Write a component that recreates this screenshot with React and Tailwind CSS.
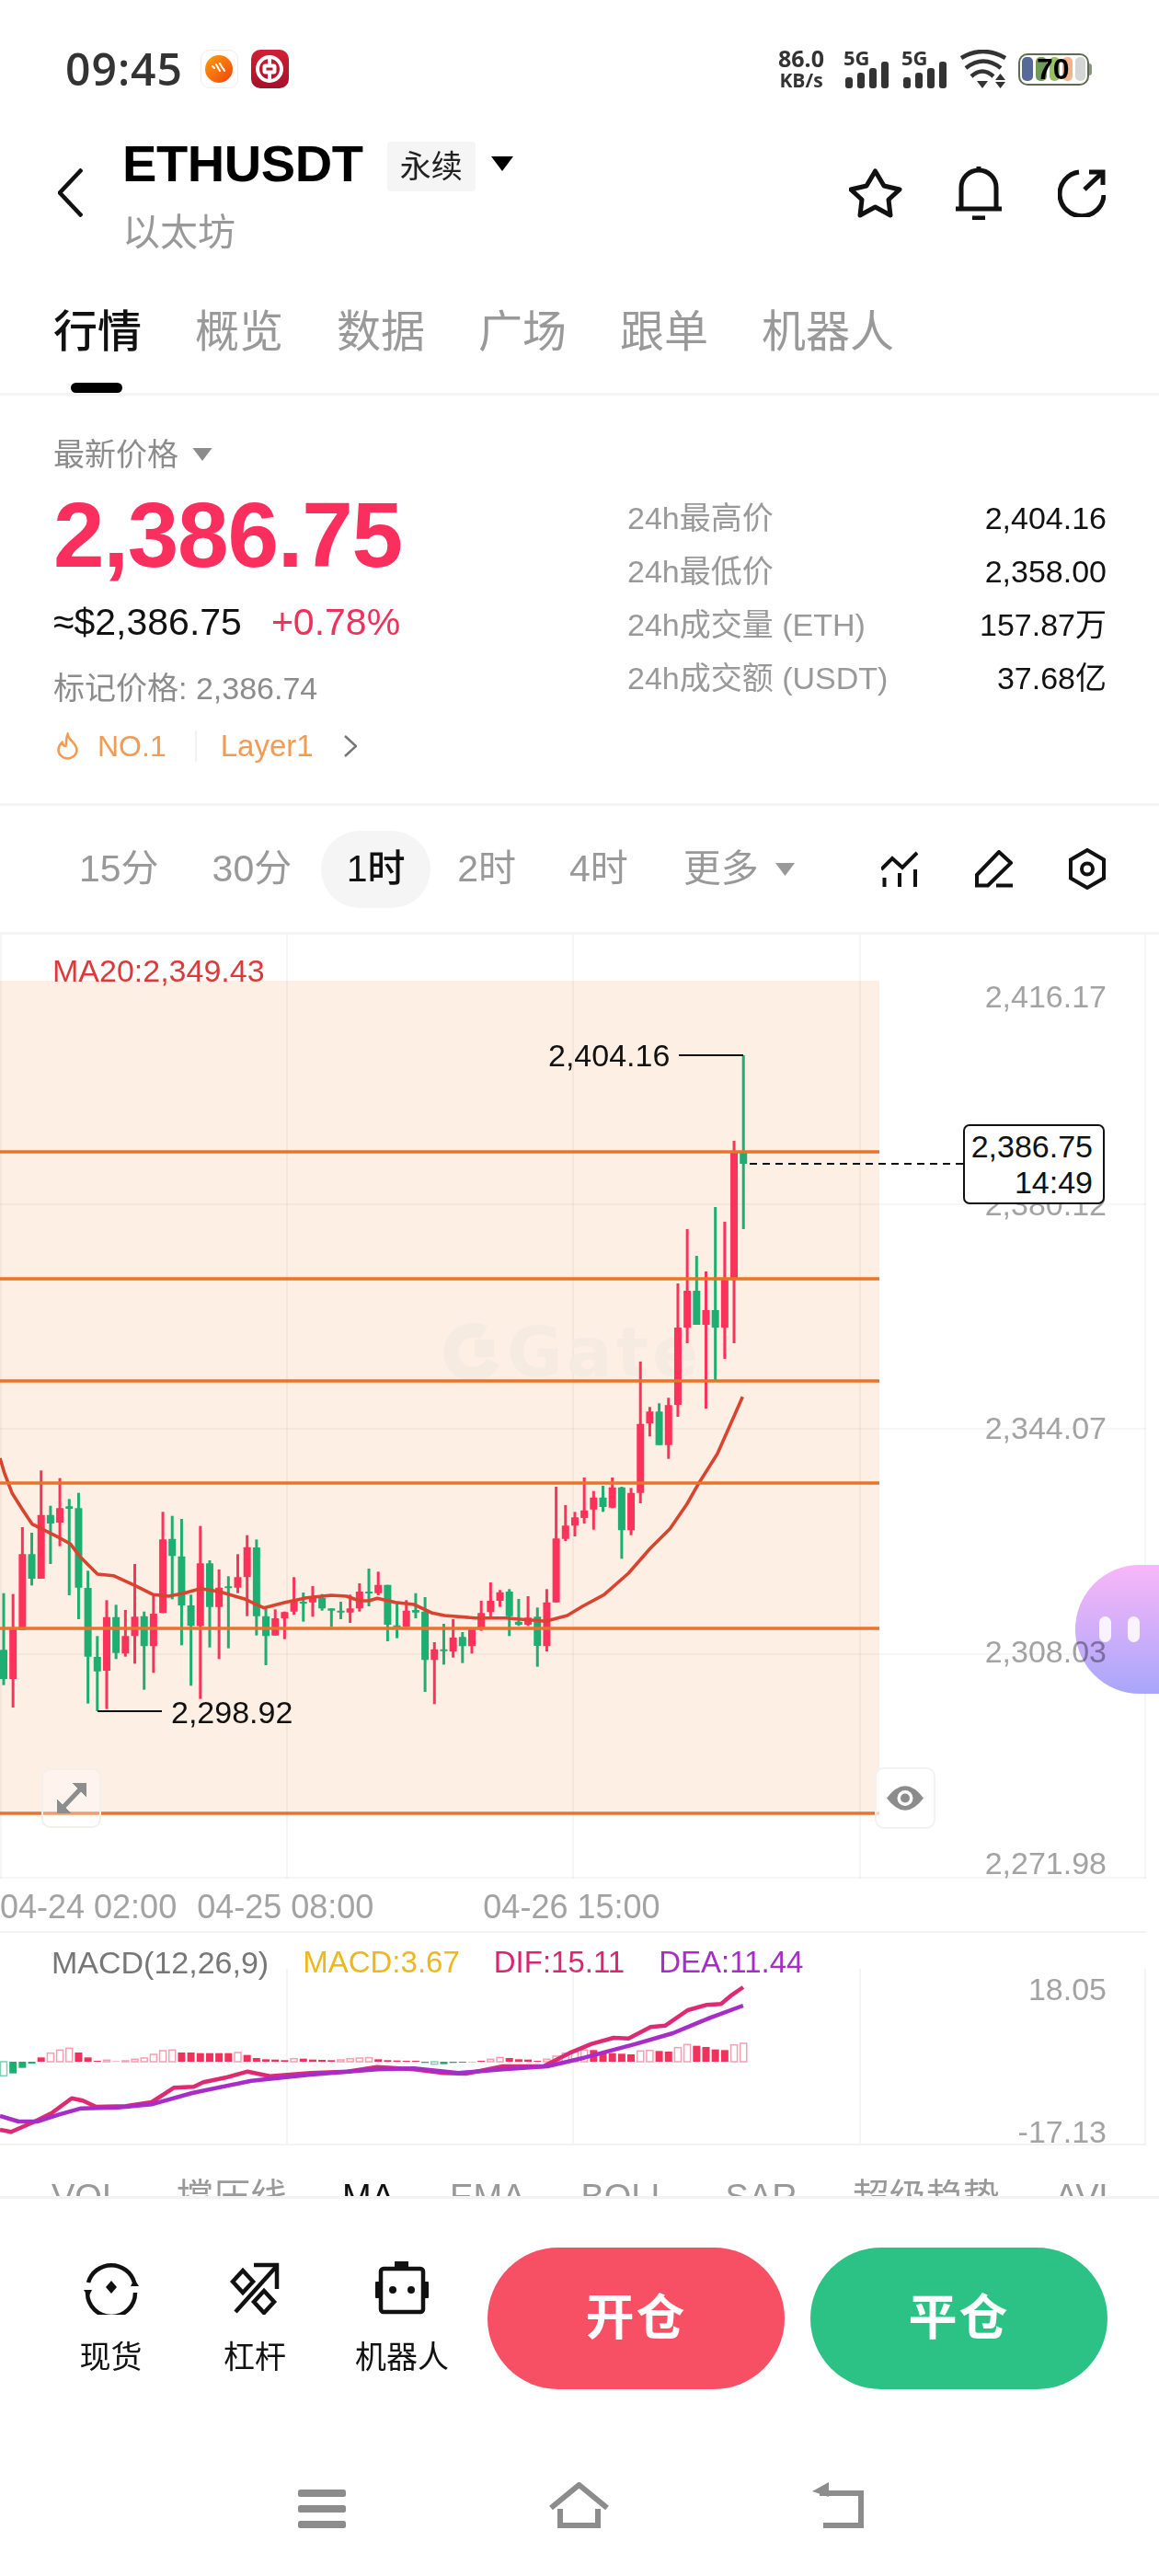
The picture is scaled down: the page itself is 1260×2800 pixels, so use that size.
import React from "react";

// candle rows: [high, bodyTop, bodyBottom, low, colour], y values read off the chart at 3x
const RED = "#fb3259";
const GREEN = "#1fae72";

const leftCandles = [
  [515, 700, 795, 815, "g"], [518, 630, 795, 888, "r"], [300, 388, 635, 635, "r"], [318, 388, 468, 490, "g"],
  [115, 260, 468, 468, "r"], [230, 260, 288, 420, "g"], [140, 238, 285, 362, "r"], [208, 232, 240, 522, "g"],
  [188, 238, 497, 600, "g"], [442, 498, 722, 875, "g"], [655, 723, 770, 900, "g"], [538, 593, 768, 893, "r"],
  [553, 593, 710, 730, "g"], [570, 655, 712, 722, "r"], [420, 592, 655, 745, "r"], [575, 590, 688, 830, "g"],
  [525, 582, 688, 775, "r"], [250, 340, 580, 580, "r"], [263, 338, 394, 535, "g"], [273, 395, 555, 685, "g"],
  [520, 555, 622, 817, "g"], [296, 418, 622, 860, "r"], [408, 418, 560, 692, "g"], [438, 497, 560, 730, "r"],
  [460, 493, 497, 695, "g"], [388, 463, 497, 515, "r"], [326, 365, 463, 590, "r"], [340, 366, 590, 653, "g"],
  [565, 590, 655, 750, "g"], [568, 597, 653, 653, "r"], [575, 577, 597, 665, "r"], [463, 540, 575, 585, "r"],
  [513, 543, 547, 608, "g"], [492, 527, 545, 592, "r"], [518, 530, 565, 572, "g"], [565, 565, 572, 625, "g"],
  [543, 572, 577, 600, "g"], [520, 565, 578, 612, "r"], [483, 510, 565, 575, "r"],
];

const midCandles = [
  [915, 990, 993, 1038, "g"], [925, 968, 995, 1002, "r"], [968, 968, 1098, 1152, "g"], [1028, 1100, 1103, 1142, "g"],
  [1018, 1052, 1105, 1105, "r"], [995, 1050, 1058, 1077, "g"], [1008, 1055, 1213, 1317, "g"], [1155, 1178, 1213, 1357, "r"],
  [1095, 1178, 1182, 1228, "g"], [1080, 1140, 1185, 1205, "r"], [1122, 1138, 1168, 1223, "g"], [1108, 1112, 1168, 1192, "r"],
  [1020, 1060, 1112, 1118, "r"], [960, 1020, 1057, 1080, "r"], [985, 992, 1020, 1040, "r"], [982, 990, 1070, 1135, "g"],
  [1014, 1088, 1098, 1102, "g"], [1005, 1075, 1098, 1102, "r"], [1042, 1072, 1167, 1235, "g"], [982, 1025, 1168, 1185, "r"],
  [648, 817, 1025, 1025, "r"], [708, 775, 818, 825, "r"], [730, 748, 775, 810, "r"], [618, 725, 750, 768, "r"],
  [662, 683, 722, 788, "r"], [645, 683, 714, 730, "g"], [618, 650, 716, 718, "r"], [648, 650, 790, 883, "g"],
  [652, 668, 790, 806, "r"], [240, 443, 668, 702, "r"], [388, 403, 442, 484, "r"], [376, 403, 512, 512, "g"],
  [358, 382, 512, 557, "r"],
];

// last ones are already page pixels
const topCandles = [
  [1395, 1443, 1527, 1540, "r"], [1336, 1403, 1443, 1460, "r"], [1365, 1403, 1440, 1440, "g"], [1382, 1424, 1440, 1531, "r"],
  [1312, 1424, 1443, 1500, "g"], [1328, 1390, 1443, 1477, "r"], [1240, 1252, 1390, 1460, "r"], [1147, 1253, 1265, 1336, "g"],
];

const toPage = (rows, base) => rows.map((r) => [base + r[0] / 3, base + r[1] / 3, base + r[2] / 3, base + r[3] / 3, r[4]]);
const candles = [...toPage(leftCandles, 1560), ...toPage(midCandles, 1400), ...topCandles];

const maLeft = [[0, 75], [15, 125], [40, 190], [75, 245], [105, 290], [135, 305], [195, 335], [230, 355], [260, 395], [290, 425], [318, 453], [370, 458], [440, 490], [500, 520], [550, 525], [600, 515], [654, 500], [715, 510], [800, 535], [860, 563], [930, 545], [1000, 530], [1080, 522], [1130, 525], [1172, 540]];
const maRight = [[3, 1020], [30, 1012], [90, 1025], [150, 1032], [210, 1060], [250, 1068], [350, 1076], [450, 1076], [580, 1087], [650, 1068], [700, 1038], [770, 1000], [850, 930], [920, 850], [985, 785], [1040, 705], [1080, 635], [1140, 540], [1222, 355]];
const maPoints = [
  ...maLeft.map(([x, y]) => `${(x / 3).toFixed(1)},${(1560 + y / 3).toFixed(1)}`),
  ...maRight.map(([x, y]) => `${(400 + x / 3).toFixed(1)},${(1400 + y / 3).toFixed(1)}`),
].join(" ");

const dif = [[0, 825], [15, 832], [45, 800], [70, 770], [97, 722], [112, 730], [130, 750], [170, 748], [205, 735], [235, 688], [262, 685], [275, 670], [305, 655], [335, 635], [365, 650], [420, 640], [470, 635], [510, 620], [560, 628], [600, 640], [630, 642], [680, 618], [735, 618], [770, 575], [800, 545], [830, 525], [850, 527], [880, 490], [900, 485], [930, 435], [955, 418], [975, 415], [990, 385], [1005, 360]];
const dea = [[0, 780], [25, 798], [50, 798], [80, 775], [110, 755], [160, 752], [205, 742], [260, 705], [340, 665], [420, 645], [510, 628], [560, 625], [620, 640], [680, 628], [740, 618], [790, 590], [860, 545], [910, 510], [960, 460], [1005, 420]];
const macdPath = (rows) => rows.map(([x, y]) => `${(x / 1.244).toFixed(1)},${(2040 + y / 3).toFixed(1)}`).join(" ");

const histogram = [-46, -38, -20, -6, 14, 28, 38, 44, 30, 14, 3, 5, 1, 3, 8, 12, 24, 36, 38, 30, 30, 28, 28, 28, 28, 30, 22, 12, 8, 7, 5, 10, 10, 7, 6, 5, 6, 10, 12, 13, 8, 5, 4, 3, 3, -4, -8, -8, -4, -3, -1, 3, 8, 14, 12, 8, 7, 3, 8, 18, 28, 32, 38, 38, 32, 28, 26, 24, 35, 37, 35, 33, 46, 56, 52, 48, 40, 38, 55, 60];

const Caret = ({ className }) => (
  <svg viewBox="0 0 24 16" className={className}>
    <polygon points="0,0 24,0 12,16" fill="currentColor" />
  </svg>
);

const SignalBars = () => (
  <svg width="49" height="42" viewBox="0 0 49 42" fill="#333">
    <text x="0" y="17" className="font-['Open_Sans'] text-[22px] font-bold">5G</text>
    <rect x="2" y="30" width="8" height="12" rx="3" />
    <rect x="15" y="25" width="8" height="17" rx="3" />
    <rect x="28" y="20" width="8" height="22" rx="3" />
    <rect x="41" y="13" width="8" height="29" rx="3" />
  </svg>
);

const StatusBar = () => (
  <div className="flex h-[130px] items-start justify-between pl-[71px] pr-[73px] pt-[54px]">
    <div className="flex h-[42px] items-center">
      <span className="font-['Open_Sans'] text-[48px] leading-[42px] font-semibold tracking-[1px] text-[#333]">09:45</span>
      <div className="ml-[19px] flex h-[42px] w-[41px] items-center justify-center rounded-[10px] border border-[#eee] bg-white">
        <div className="flex h-[30px] w-[30px] items-center justify-center rounded-full bg-gradient-to-br from-[#ff9d00] to-[#ec3c12]">
          <svg width="18" height="14" viewBox="0 0 18 14" stroke="white" strokeWidth="2" strokeLinecap="round">
            <path d="M2 4 L4 6 M6 2 L10 9 M10 1 L13 6 M14 7 L15 9" />
          </svg>
        </div>
      </div>
      <div className="ml-[14px] flex h-[42px] w-[41px] items-center justify-center rounded-[10px] bg-gradient-to-b from-[#d21f35] to-[#a3122a]">
        <svg width="32" height="32" viewBox="0 0 32 32" fill="none" stroke="white" strokeWidth="4">
          <circle cx="16" cy="16" r="13" />
          <rect x="10.5" y="12.5" width="11" height="7" rx="1" />
          <path d="M16 3 V12 M16 20 V29" />
        </svg>
      </div>
    </div>
    <div className="flex h-[42px] items-center">
      <div className="flex w-[52px] flex-col items-center font-['Open_Sans'] font-bold text-[#333]">
        <span className="text-[25px] leading-[24px]">86.0</span>
        <span className="text-[21px] leading-[24px]">KB/s</span>
      </div>
      <div className="ml-[20px]"><SignalBars /></div>
      <div className="ml-[14px]"><SignalBars /></div>
      <svg className="ml-[14px]" width="51" height="42" viewBox="0 0 51 42" fill="none">
        <path d="M2 9 Q25.5 -5 50 9" stroke="#333" strokeWidth="4.5" />
        <path d="M7 20 Q26 5 45 20" stroke="#333" strokeWidth="4.5" />
        <path d="M13 29 Q25 18 37 29" stroke="#333" strokeWidth="4.5" />
        <polygon points="19,34 31,34 25,42" fill="#333" />
        <polygon points="39,33 50,33 44.5,26" fill="#333" />
        <polygon points="39,35 50,35 44.5,42" fill="#333" />
      </svg>
      <div className="relative ml-[13px] flex h-[35px] w-[80px] items-center">
        <div className="flex h-[35px] w-[77px] items-center gap-[3px] rounded-[10px] border-2 border-[#5d6b52] px-[2px]">
          <div className="h-[26px] w-[12px] rounded-[5px] bg-[#56699b]" />
          <div className="h-[26px] w-[12px] rounded-[5px] bg-[#6f9a5a]" />
          <div className="h-[26px] w-[11px] rounded-[5px] bg-[#9ac060]" />
          <div className="h-[26px] w-[11px] rounded-[5px] bg-[#f2b48a]" />
          <div className="h-[26px] w-[11px] rounded-[5px] bg-[#d5d5d5]" />
        </div>
        <div className="h-[13px] w-[3px] rounded-r-sm bg-[#8a9480]" />
        <span className="absolute left-[20px] top-0 font-['Liberation_Sans'] text-[32px] leading-[35px] font-bold text-black">70</span>
      </div>
    </div>
  </div>
);

const Header = () => (
  <div className="flex h-[160px] items-start pl-[63px] pr-[58px]">
    <svg className="mt-[53px]" width="27" height="53" viewBox="0 0 27 53" fill="none" stroke="#111" strokeWidth="4.5">
      <path d="M26 1 L2 26.5 L26 52" />
    </svg>
    <div className="ml-[43px] pt-[18px]">
      <div className="flex h-[60px] items-center">
        <span className="text-[56px] leading-[60px] font-bold tracking-[-0.4px] text-black">ETHUSDT</span>
        <span className="ml-[26px] mt-[6px] flex h-[54px] w-[96px] items-center justify-center rounded-[4px] bg-[#f5f5f5] text-[34px] text-[#222]">永续</span>
        <Caret className="ml-[17px] h-[16px] w-[24px] text-black" />
      </div>
      <div className="mt-[23px] text-[41px] leading-[44px] text-[#999]">以太坊</div>
    </div>
    <div className="ml-auto mt-[51px] flex items-center">
      <svg width="58" height="54" viewBox="0 0 58 54" fill="none" stroke="#111" strokeWidth="5" strokeLinejoin="round">
        <polygon points="28.5,3 38,19 55,23 43,34 45,51 28.5,42 12,51 14,34 2,23 19,19" />
      </svg>
      <svg className="ml-[58px]" width="50" height="58" viewBox="0 0 50 58" fill="none" stroke="#111" strokeWidth="5">
        <path d="M6 46 V23 A19 19 0 0 1 44 23 V46" />
        <path d="M0 46 H50 M25 0 V5 M18 56 H32" />
      </svg>
      <svg className="ml-[61px]" width="52" height="52" viewBox="0 0 52 52" fill="none" stroke="#111" strokeWidth="5">
        <path d="M23 3 A24 24 0 1 0 50 28" />
        <path d="M29 22 L49 3 M34 3 H49 V17" />
      </svg>
    </div>
  </div>
);

const Tabs = () => (
  <div className="flex h-[140px] items-start gap-[58px] border-b-[3px] border-[#f4f4f4] pl-[58px] pt-[47px] text-[48px] leading-[48px] text-[#999]">
    <div>
      <div className="font-medium text-[#111]">行情</div>
      <div className="ml-[19px] mt-[31px] h-[11px] w-[56px] rounded-full bg-black" />
    </div>
    <div>概览</div>
    <div>数据</div>
    <div>广场</div>
    <div>跟单</div>
    <div>机器人</div>
  </div>
);

const stats = [
  ["24h最高价", "2,404.16"],
  ["24h最低价", "2,358.00"],
  ["24h成交量 (ETH)", "157.87万"],
  ["24h成交额 (USDT)", "37.68亿"],
];

const MarketInfo = () => (
  <div className="flex h-[446px] justify-between border-b-[3px] border-[#f4f4f4] pl-[58px] pr-[57px] pt-[44px]">
    <div>
      <div className="flex h-[40px] items-center text-[34px] text-[#8c8c8c]">
        最新价格
        <Caret className="ml-[15px] h-[14px] w-[22px] text-[#8c8c8c]" />
      </div>
      <div className="mt-[17px] text-[100px] leading-[100px] font-bold tracking-[-1.3px] text-[#fb2f5e]">2,386.75</div>
      <div className="mt-[24px] flex h-[44px] items-center text-[41px]">
        <span className="text-[#111]">≈$2,386.75</span>
        <span className="ml-[32px] text-[#f0315c]">+0.78%</span>
      </div>
      <div className="mt-[29px] h-[40px] text-[34px] leading-[40px] text-[#8c8c8c]">标记价格: 2,386.74</div>
      <div className="mt-[23px] flex h-[40px] items-center text-[32px] text-[#f39a53]">
        <svg className="ml-[3px]" width="25" height="30" viewBox="0 0 24 30" fill="none" stroke="#f39a53" strokeWidth="2.5">
          <path d="M12 2 C13 9 22 12 22 19 A10 9.5 0 0 1 2 19 C2 15 4 13 6 11 C7 14 8 15 10 15 C11 11 10 6 12 2 Z" />
        </svg>
        <span className="ml-[20px]">NO.1</span>
        <div className="ml-[31px] h-[34px] w-[2px] bg-[#f2f2f2]" />
        <span className="ml-[26px] text-[33px]">Layer1</span>
        <svg className="ml-[33px]" width="14" height="24" viewBox="0 0 14 24" fill="none" stroke="#777" strokeWidth="2.5">
          <path d="M1 1 L13 12 L1 23" />
        </svg>
      </div>
    </div>
    <div className="w-[521px] pt-[60px]">
      {stats.map(([label, value]) => (
        <div key={label} className="flex h-[58px] items-center justify-between text-[34px]">
          <span className="text-[#999]">{label}</span>
          <span className="text-[#111]">{value}</span>
        </div>
      ))}
    </div>
  </div>
);

const Periods = () => (
  <div className="flex h-[140px] items-center border-b-[3px] border-[#f4f4f4] pl-[86px] text-[41px] text-[#999]">
    <span>15分</span>
    <span className="ml-[58px]">30分</span>
    <span className="ml-[32px] flex h-[84px] w-[119px] items-center justify-center rounded-[42px] bg-[#f5f5f5] font-medium text-[#111]">1时</span>
    <span className="ml-[29px]">2时</span>
    <span className="ml-[58px]">4时</span>
    <span className="ml-[60px]">更多</span>
    <Caret className="ml-[18px] h-[14px] w-[21px] text-[#999]" />
    <svg className="ml-[94px]" width="40" height="40" viewBox="0 0 40 40" fill="none" stroke="#111" strokeWidth="4">
      <path d="M0 20 L12 8 L23 18 L39 2" />
      <path d="M3.5 29 V39 M20 24 V39 M37 20 V39" />
    </svg>
    <svg className="ml-[62px]" width="41" height="41" viewBox="0 0 41 41" fill="none" stroke="#111" strokeWidth="4">
      <path d="M2 27 L26 2 L39 14 L14 38.5 H2 Z" />
      <path d="M23 38.5 H41" />
    </svg>
    <svg className="ml-[61px]" width="40" height="45" viewBox="0 0 40 45" fill="none" stroke="#111" strokeWidth="4">
      <polygon points="20,2 38,12.5 38,32.5 20,43 2,32.5 2,12.5" />
      <circle cx="20" cy="22.5" r="6" />
    </svg>
  </div>
);

const Chart = () => (
  <div className="relative h-[1026px]">
    <svg className="absolute left-0 top-0" width="1260" height="1026" viewBox="0 1016 1260 1026">
      <rect x="0" y="1066" width="956" height="905" fill="#feefe5" />
      {[1, 312, 623, 935, 1245].map((x) => (
        <line key={x} x1={x} y1="1016" x2={x} y2="2042" stroke="#000" strokeOpacity="0.035" strokeWidth="2" />
      ))}
      {[1309, 1553, 1798, 2041].map((y) => (
        <line key={y} x1="0" y1={y} x2="1246" y2={y} stroke="#000" strokeOpacity="0.035" strokeWidth="2" />
      ))}
      {/* watermark */}
      <path d="M526 1449 A24 24 0 1 0 536 1480" fill="none" stroke="#f6ebe1" strokeWidth="16" />
      <rect x="516" y="1456" width="21" height="19" fill="#f6ebe1" />
      <text x="551" y="1496" className="font-['DejaVu_Sans'] text-[74px] font-bold tracking-[4px]" fill="#f6ebe1">Gate</text>
      {candles.map((c, i) => {
        const x = 4 + 10.18 * i;
        const fill = c[4] === "r" ? RED : GREEN;
        return (
          <g key={i} fill={fill}>
            <rect x={x - 1.5} y={c[0]} width="3" height={c[3] - c[0]} />
            <rect x={x - 4} y={c[1]} width="8" height={Math.max(c[2] - c[1], 2)} rx="0.5" />
          </g>
        );
      })}
      <polyline points={maPoints} fill="none" stroke="#d9432f" strokeWidth="3.6" strokeLinejoin="round" />
      {[1252, 1390, 1501, 1612, 1770, 1971].map((y) => (
        <line key={y} x1="0" y1={y} x2="956" y2={y} stroke="#e8732a" strokeWidth="3.4" />
      ))}
      <path d="M738 1147 H808 M106 1860 H176" stroke="#111" strokeWidth="2" />
      <line x1="815" y1="1265" x2="1047" y2="1265" stroke="#111" strokeWidth="2" strokeDasharray="8 6" />
    </svg>

    <div className="absolute right-0 top-[685px] flex h-[140px] w-[91px] items-center gap-[18px] rounded-l-[70px] bg-gradient-to-b from-[#f9b6f8] to-[#a8a6fb] pl-[26px]">
      <div className="h-[28px] w-[13px] rounded-full bg-white/85" />
      <div className="h-[28px] w-[13px] rounded-full bg-white/85" />
    </div>

    <span className="absolute left-[57px] top-[19px] text-[34px] leading-[40px] text-[#db3a3a]">MA20:2,349.43</span>
    <span className="absolute left-[596px] top-[111px] text-[34px] leading-[40px] text-[#111]">2,404.16</span>
    <span className="absolute left-[186px] top-[825px] text-[34px] leading-[40px] text-[#111]">2,298.92</span>

    <span className="absolute right-[57px] top-[47px] text-[34px] leading-[40px] text-[#a3a3a3]">2,416.17</span>
    <span className="absolute right-[57px] top-[273px] text-[34px] leading-[40px] text-[#a3a3a3]">2,380.12</span>
    <span className="absolute right-[57px] top-[516px] text-[34px] leading-[40px] text-[#a3a3a3]">2,344.07</span>
    <span className="absolute right-[57px] top-[759px] text-[34px] leading-[40px] text-[#a3a3a3] mix-blend-multiply">2,308.03</span>
    <span className="absolute right-[57px] top-[989px] text-[34px] leading-[40px] text-[#a3a3a3]">2,271.98</span>

    <div className="absolute left-[1047px] top-[206px] flex h-[87px] w-[154px] flex-col items-end justify-center rounded-[7px] border-2 border-[#111] bg-white pr-[11px] text-[34px] leading-[39px] text-[#111]">
      <span>2,386.75</span>
      <span>14:49</span>
    </div>

    <div className="absolute left-[45px] top-[906px] flex h-[65px] w-[65px] items-center justify-center rounded-[10px] border-2 border-[#f2efec] bg-white/30">
      <svg width="32" height="33" viewBox="0 0 32 33" fill="#8d8d8d" stroke="#8d8d8d">
        <polygon points="32,0 32,15 17,0" />
        <polygon points="0,33 0,18 15,33" />
        <line x1="7" y1="26" x2="25" y2="7" strokeWidth="5" />
      </svg>
    </div>
    <div className="absolute left-[951px] top-[905px] flex h-[67px] w-[66px] items-center justify-center rounded-[10px] border-2 border-[#f2f2f2] bg-white/70">
      <svg width="40" height="27" viewBox="0 0 40 27">
        <path d="M0 13.5 Q20 -13 40 13.5 Q20 40 0 13.5 Z" fill="#8c8c8c" />
        <circle cx="20" cy="13.5" r="8.5" fill="#fff" />
        <circle cx="20" cy="13.5" r="5" fill="#8c8c8c" />
      </svg>
    </div>
  </div>
);

const DateAxis = () => (
  <div className="flex h-[59px] w-[1246px] items-center border-b-2 border-[#f2f2f2] pt-[4px] text-[36px] text-[#a3a3a3]">
    <span>04-24 02:00</span>
    <span className="ml-[22px]">04-25 08:00</span>
    <span className="ml-[119px]">04-26 15:00</span>
  </div>
);

const Macd = () => (
  <div className="relative h-[231px]">
    <svg className="absolute left-0 top-0" width="1260" height="231" viewBox="0 2101 1260 231">
      {[312, 623, 935, 1245].map((x) => (
        <line key={x} x1={x} y1="2140" x2={x} y2="2332" stroke="#f4f4f4" strokeWidth="2" />
      ))}
      <line x1="0" y1="2331" x2="1246" y2="2331" stroke="#f2f2f2" strokeWidth="2" />
      {histogram.map((v, i) => {
        const x = 4 + 10.18 * i;
        const h = Math.abs(v) / 3;
        const y = v > 0 ? 2241 - h : 2241;
        const prev = i > 0 ? histogram[i - 1] : v * 2;
        const hollow = i === 0 || (Math.sign(prev) === Math.sign(v) && Math.abs(v) > Math.abs(prev));
        const colour = v > 0 ? "#f0315c" : "#1fae72";
        if (hollow) {
          return <rect key={i} x={x - 3.5} y={y} width="7" height={h} fill="#fff" stroke={v > 0 ? "#f4a0b0" : "#7fd0ae"} strokeWidth="1.5" />;
        }
        return <rect key={i} x={x - 4} y={y} width="8" height={h} fill={colour} />;
      })}
      <polyline points={macdPath(dif)} fill="none" stroke="#dd2a72" strokeWidth="4.5" strokeLinejoin="round" />
      <polyline points={macdPath(dea)} fill="none" stroke="#a72dc9" strokeWidth="4.5" strokeLinejoin="round" />
    </svg>
    <div className="absolute left-[56px] top-[12px] flex items-center gap-[37px] text-[33px] leading-[40px]">
      <span className="text-[34px] text-[#777]">MACD(12,26,9)</span>
      <span className="text-[#efb71e]">MACD:3.67</span>
      <span className="text-[#d9266e]">DIF:15.11</span>
      <span className="text-[#a72dc9]">DEA:11.44</span>
    </div>
    <span className="absolute right-[57px] top-[41px] text-[34px] leading-[40px] text-[#a3a3a3]">18.05</span>
    <span className="absolute right-[57px] top-[196px] text-[34px] leading-[40px] text-[#a3a3a3]">-17.13</span>
  </div>
);

const Indicators = () => (
  <div className="flex h-[55px] w-[1205px] gap-[60px] overflow-hidden whitespace-nowrap pl-[56px] pt-[36px] text-[38px] leading-[40px] text-[#999]">
    <span>VOL</span>
    <span className="text-[40px]">撑压线</span>
    <span className="text-[#111]">MA</span>
    <span>EMA</span>
    <span>BOLL</span>
    <span>SAR</span>
    <span className="text-[40px]">超级趋势</span>
    <span>AVL</span>
  </div>
);

const BottomBar = () => (
  <div className="flex h-[263px] items-start border-t-[3px] border-[#f3f3f3] pl-[42px] pt-[53px]">
    <div className="flex w-[157px] flex-col items-center pt-[13px]">
      <svg width="60" height="60" viewBox="0 0 60 60" fill="none" stroke="#111" strokeWidth="4.5">
        <path d="M5 25 A26 26 0 0 1 55 25" />
        <path d="M4 36 A26 26 0 0 0 56 36" />
        <polygon points="0,33 9,33 5,41" fill="#111" stroke="none" />
        <polygon points="60,29 51,29 55,21" fill="#111" stroke="none" />
        <polygon points="30,23 36,30 30,37 24,30" fill="#111" stroke="none" />
      </svg>
      <span className="mt-[26px] text-[34px] leading-[40px] text-[#111]">现货</span>
    </div>
    <div className="flex w-[156px] flex-col items-center pt-[13px]">
      <svg width="54" height="60" viewBox="0 0 54 60" fill="none" stroke="#111" strokeWidth="4.5">
        <path d="M6 57 L50 8" />
        <path d="M26 6 H51 V32" />
        <polygon points="14,12 25,24 14,36 3,24" />
        <polygon points="37,34 48,46 37,58 26,46" />
      </svg>
      <span className="mt-[26px] text-[34px] leading-[40px] text-[#111]">杠杆</span>
    </div>
    <div className="flex w-[164px] flex-col items-center pt-[13px]">
      <svg width="58" height="60" viewBox="0 0 58 60">
        <rect x="21" y="2" width="15" height="6" fill="#111" />
        <rect x="6" y="10" width="46" height="47" rx="3" fill="none" stroke="#111" strokeWidth="4.5" />
        <rect x="0" y="24" width="5" height="18" rx="1" fill="#111" />
        <rect x="53" y="24" width="5" height="18" rx="1" fill="#111" />
        <circle cx="19" cy="33" r="4" fill="#111" />
        <circle cx="39" cy="33" r="4" fill="#111" />
      </svg>
      <span className="mt-[26px] text-[34px] leading-[40px] text-[#111]">机器人</span>
    </div>
    <button className="ml-[11px] h-[154px] w-[323px] rounded-full bg-[#f74f63] text-[53px] font-bold tracking-[2px] text-white">开仓</button>
    <button className="ml-[28px] h-[154px] w-[323px] rounded-full bg-[#2cc285] text-[53px] font-bold tracking-[2px] text-white">平仓</button>
  </div>
);

const SystemNav = () => (
  <div className="flex h-[150px] items-start gap-[220px] pl-[324px] pt-[48px]">
    <svg width="52" height="50" viewBox="0 0 52 50" fill="#8c8c8c">
      <rect x="0" y="8" width="52" height="8" rx="2.5" />
      <rect x="0" y="25" width="52" height="8" rx="2.5" />
      <rect x="0" y="42" width="52" height="8" rx="2.5" />
    </svg>
    <svg width="67" height="50" viewBox="0 0 67 50" fill="none" stroke="#8c8c8c" strokeWidth="6">
      <path d="M3 28 L33.5 3 L64 28" />
      <path d="M13 29 V47 H54 V29" />
    </svg>
    <svg width="56" height="50" viewBox="0 0 56 50" fill="none" stroke="#8c8c8c" strokeWidth="6">
      <path d="M8 12 H53 V47 H12" />
      <polygon points="18,0 0,10 18,16" fill="#8c8c8c" stroke="none" />
    </svg>
  </div>
);

const App = () => {
  return (
    <div className="h-[2800px] w-[1260px] overflow-hidden bg-white font-['Liberation_Sans','Noto_Sans_CJK_SC',sans-serif]">
      <StatusBar />
      <Header />
      <Tabs />
      <MarketInfo />
      <Periods />
      <Chart />
      <DateAxis />
      <Macd />
      <Indicators />
      <BottomBar />
      <SystemNav />
    </div>
  );
};

export default App;
